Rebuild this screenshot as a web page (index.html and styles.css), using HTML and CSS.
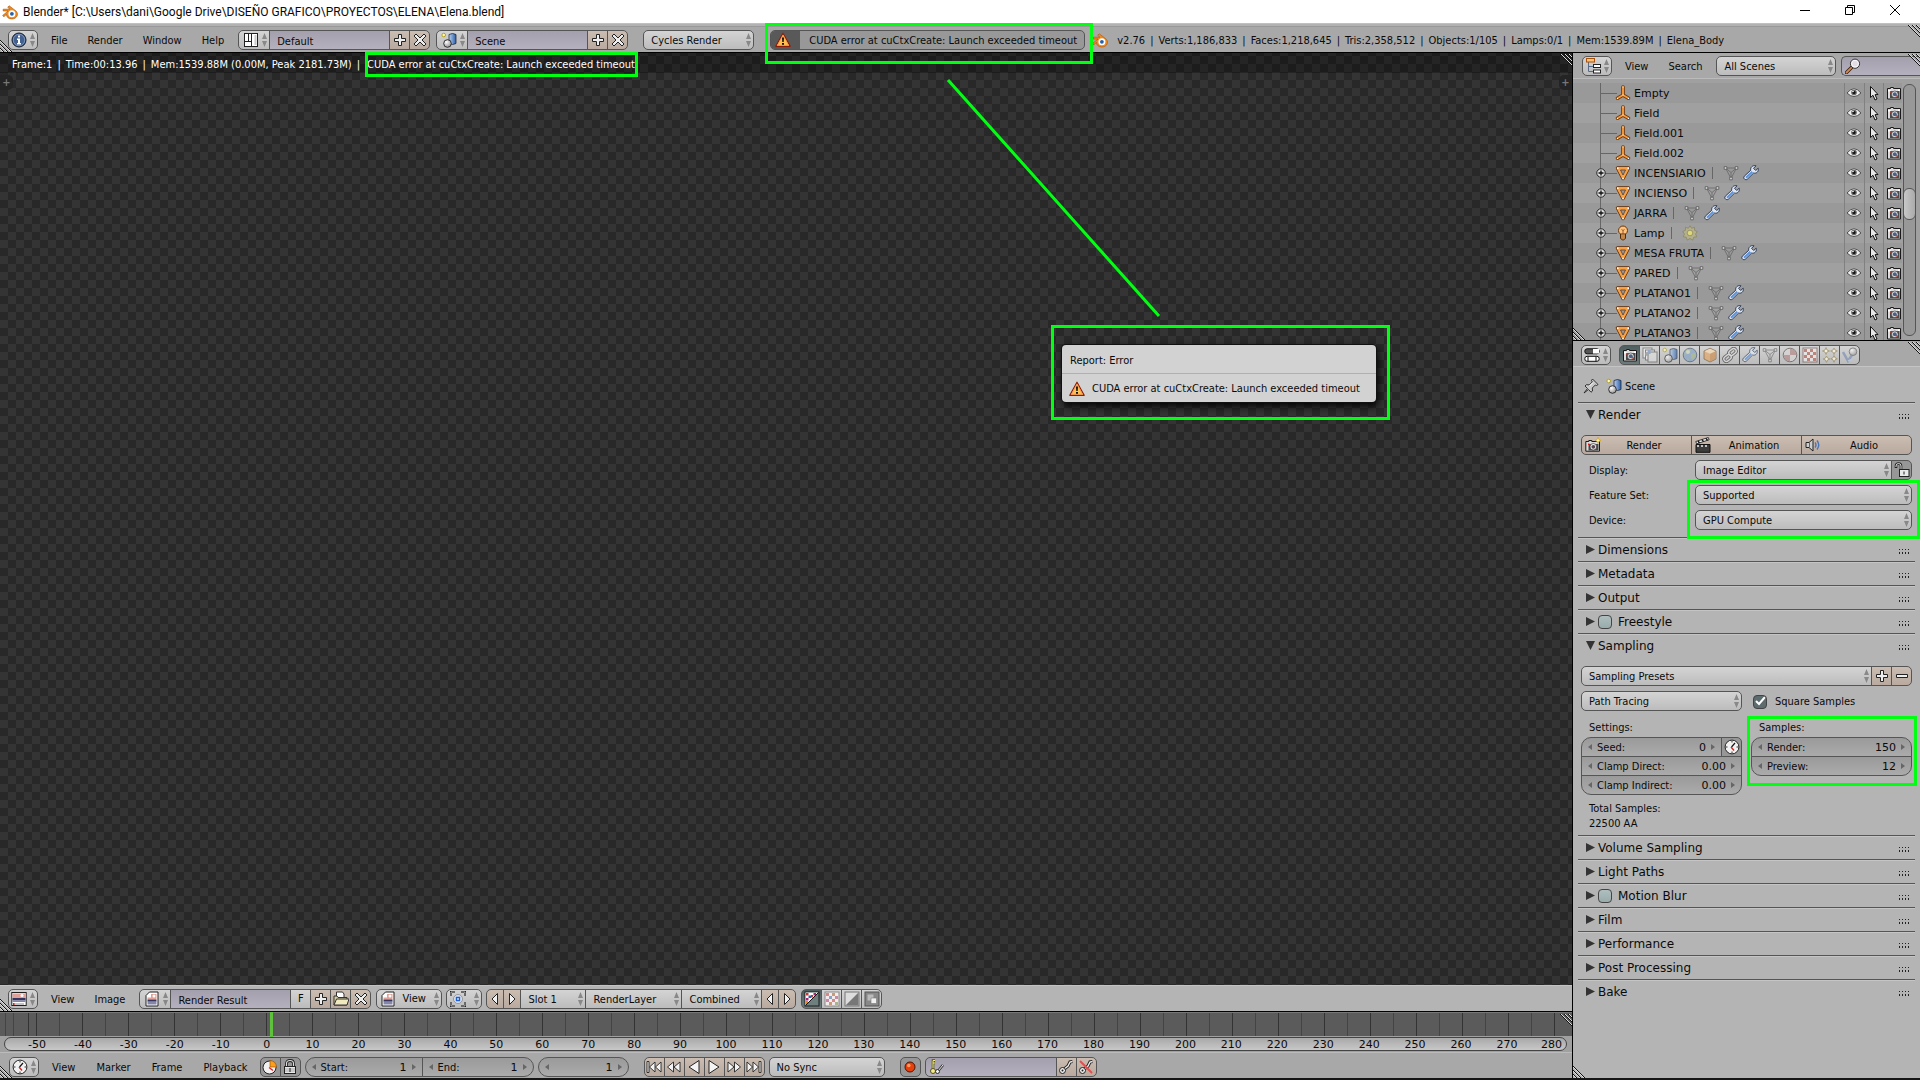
FILE: index.html
```html
<!DOCTYPE html>
<html lang="en">
<head>
    <meta charset="UTF-8">
    <meta name="viewport" content="width=device-width, initial-scale=1.0">
    <title>Blender* [C:\Users\dani\Google Drive\DISEÑO GRAFICO\PROYECTOS\ELENA\Elena.blend]</title>
    <link rel="stylesheet" href="styles.css">
</head>
<body>
    <!-- Icon set -->
    <svg class="sprite" aria-hidden="true">
        <linearGradient id="g-blue" x1="0" y1="0" x2="1" y2="0"><stop offset="0" stop-color="#b8d0f0"/><stop offset="1" stop-color="#2c5fa8"/></linearGradient>
        <radialGradient id="g-ball" cx=".35" cy=".3" r=".8"><stop offset="0" stop-color="#fff"/><stop offset="1" stop-color="#8a8a8a"/></radialGradient>
        <symbol id="blender" viewBox="0 0 16 16"><path d="M.6 11.500 6 7H1.200V5.200h6.600L5.700 3.300 7.200 1.800l6.700 5.100c3.300 2.900 1.200 8.100-4.100 8.100-3.300 0-5.400-2-5.400-4.600l-2.400 2.400z" fill="#f08a1c" stroke="#a8520c" stroke-width=".6"/><circle cx="9.900" cy="9.800" r="3.500" fill="#fff"/><circle cx="9.900" cy="9.800" r="1.900" fill="#2763ab"/></symbol>
        <symbol id="info" viewBox="0 0 16 16"><circle cx="8" cy="8" r="7" fill="#42618f" stroke="#151d2c"/><circle cx="8" cy="8" r="5.700" fill="none" stroke="#9fb4d6" stroke-width=".6"/><path d="M7 3.500h2v2H7zM6 6.500h3v4.500h1v1.500H6V11h1V8H6z" fill="#fff"/></symbol>
        <symbol id="layout" viewBox="0 0 16 16"><rect x="1.500" y="1.500" width="13" height="13" fill="#fff" stroke="#222"/><path d="M8.500 1v14M2 9.500h6M5.500 2v7" stroke="#222"/><path d="M12.500 3v10" stroke="#ccc" stroke-width="2"/></symbol>
        <symbol id="scene" viewBox="0 0 16 16"><path d="M8 2.500q3.500-2 7 0v9q-3.500 2-7 0z" fill="url(#g-blue)" stroke="#222a3a" stroke-width=".8"/><circle cx="6.500" cy="11.500" r="3.800" fill="url(#g-ball)" stroke="#222" stroke-width=".9"/><circle cx="2.700" cy="3" r="1.800" fill="#fffbc0" stroke="#b4a020"/></symbol>
        <symbol id="plus" viewBox="0 0 16 16"><path d="M6.500 2.500h3v4h4v3h-4v4h-3v-4h-4v-3h4z" fill="#eee" stroke="#222"/></symbol>
        <symbol id="minus" viewBox="0 0 16 16"><path d="M2.500 6.500h11v3h-11z" fill="#eee" stroke="#222"/></symbol>
        <symbol id="cross" viewBox="0 0 16 16"><path d="m4 2 4 4 4-4 2 2-4 4 4 4-2 2-4-4-4 4-2-2 4-4-4-4z" fill="#eee" stroke="#222"/></symbol>
        <symbol id="warn" viewBox="0 0 16 16"><path d="M8 1.200 15.200 14.300H.8z" fill="#ffc34d" stroke="#8c1c08" stroke-width="1.200" stroke-linejoin="round"/><path d="M8 3 13.500 13.300h-11z" fill="none" stroke="#f9905a" stroke-width=".8"/><path d="M7 5.500h2L8.700 10H7.300zM7 11h2v1.700H7z" fill="#111"/></symbol>
        <symbol id="tree" viewBox="0 0 16 16"><path d="M3.500 4v9.500H8M3.500 8.500H8" fill="none" stroke="#5a6b85"/><rect x="1.500" y=".5" width="8" height="3.500" fill="#ffc274" stroke="#a8500c"/><rect x="8.500" y="6.500" width="7" height="3" fill="#fff" stroke="#222"/><rect x="8.500" y="12" width="7" height="3" fill="#fff" stroke="#222"/></symbol>
        <symbol id="lens" viewBox="0 0 16 16"><path d="m6.500 9.500-5 5" stroke="#3a2314" stroke-width="3.500" stroke-linecap="round"/><path d="m6.200 9.800-4.700 4.700" stroke="#d08a56" stroke-width="1.800" stroke-linecap="round"/><circle cx="10" cy="5.700" r="4.600" fill="#e4dde6" stroke="#333"/><circle cx="10" cy="5.700" r="3.400" fill="none" stroke="#fff" stroke-width=".8"/></symbol>
        <symbol id="empty" viewBox="0 0 16 16"><path d="M8 2v8L2.500 13.200M8 10l5.500 3.200" fill="none" stroke="#6e3406" stroke-width="3.600" stroke-linecap="round"/><path d="M8 2v8L2.500 13.200M8 10l5.500 3.200" fill="none" stroke="#f79a3c" stroke-width="1.900" stroke-linecap="round"/><path d="M7.500 1.500h1v1h-1zM2 13h1v1H2zM13 13h1v1h-1zM7.500 9.500h1v1h-1z" fill="#fff"/></symbol>
        <symbol id="mesh" viewBox="0 0 16 16"><path d="M2.500 3h11L8 13.500z" fill="#e7a257" stroke="#5e2a02" stroke-width="3.400" stroke-linejoin="round"/><path d="M2.500 3h11L8 13.500z" fill="#b2b0ae" stroke="#fb9f3f" stroke-width="1.900" stroke-linejoin="round"/><path d="M5.500 5h5L8 10z" fill="#999" stroke="#5e2a02" stroke-width=".7"/><path d="M2 2.500h1.500v1.500H2zM12.500 2.500H14v1.500h-1.500zM7.300 12.700h1.500v1.500H7.300z" fill="#fff"/></symbol>
        <symbol id="lamp" viewBox="0 0 16 16"><circle cx="8" cy="5.500" r="4.500" fill="#ffc27c" stroke="#6e3406"/><path d="M5.500 9h5v4.500L8 15.200l-2.500-1.700z" fill="#f6b26b" stroke="#4e2a0a"/><path d="M6 11h4M6 13h4M8 9V5.500L6.500 4.500M8 5.500l1.500-1" fill="none" stroke="#7b4410" stroke-width=".8"/></symbol>
        <symbol id="meshdata" viewBox="0 0 16 16"><path d="M2.500 3h11L8 13.500zM2.500 3 8 7.500 13.500 3M8 7.500v6" fill="none" stroke="#6c6c6c" stroke-width=".9"/><g fill="#ddd" stroke="#555" stroke-width=".8"><path d="M1.200 1.700h2.600v2.600H1.200zM12.200 1.700h2.600v2.600h-2.600zM6.700 12.200h2.600v2.600H6.700z"/></g></symbol>
        <symbol id="sun" viewBox="0 0 16 16"><path d="m8 .8 1.600 2.500 2.900-1 .1 3 2.700 1.300L13.500 9l1.300 2.700-3 .5-1 2.900L8 13.500l-2.800 1.600-1-2.900-3-.5L2.500 9 .7 6.600l2.700-1.300.1-3 2.900 1z" fill="#b3b08e" stroke="#85815c" stroke-width=".7"/><circle cx="8" cy="8" r="2.800" fill="#e0d67c" stroke="#85815c" stroke-width=".7"/></symbol>
        <symbol id="wrench" viewBox="0 0 16 16"><path d="M13 .8 10.500 3.300l2.200 2.200 2.500-2.300c.8 3.500-2 5.600-4.600 4.800L4.500 14c-1.800 2-5-.8-3.200-2.800L7.800 5.200C7 2.500 9.800-.2 13 .8z" fill="#dfe7f3" stroke="#1d2b48" stroke-width=".9"/><path d="M9.300 6.800 3 12.800" stroke="#5b93dd" stroke-width="2"/></symbol>
        <symbol id="eye" viewBox="0 0 16 16"><path d="M1 8q7-8.500 14 0-7 7-14 0z" fill="#eee" stroke="#444" stroke-width=".9"/><circle cx="8" cy="7.500" r="2.800" fill="#666"/><circle cx="8" cy="7.500" r="1.500" fill="#111"/><circle cx="7" cy="6.500" r=".8" fill="#fff"/></symbol>
        <symbol id="cursor" viewBox="0 0 16 16"><path d="M4.500 1.500v11l2.500-2.200 2 4.700 2-1-2-4.300 3-.2z" fill="#e8e8e8" stroke="#111"/></symbol>
        <symbol id="camera" viewBox="0 0 16 16"><path d="M1.500 3.500h3v-1h3v1h7v10.500h-13z" fill="#dcdcdc" stroke="#1a1a1a"/><path d="M4 6h9.500v7H4z" fill="#4a4a4a"/><path d="M2 5h2.500v1.500H2zM12 4.500h2v1.500h-2z" fill="#fff"/><circle cx="8.800" cy="9.300" r="3.300" fill="#e8e8e8" stroke="#333" stroke-width=".6"/><circle cx="8.800" cy="9.300" r="2" fill="#4d5f80"/><path d="M9.500 10H11v1.500H9.500zM4 6h1.500v1.500H4z" fill="#d8402e"/></symbol>
        <symbol id="expand" viewBox="0 0 16 16"><circle cx="8" cy="8" r="4.200" fill="#ddd" stroke="#222"/><path d="M8 5.500v5M5.500 8h5" stroke="#111" stroke-width="1.300"/></symbol>
        <symbol id="props" viewBox="0 0 16 16"><rect x=".8" y="1.800" width="14.400" height="5" rx="2.300" fill="#555" stroke="#111"/><path d="M9 2h6v4.500H9z" fill="#fff"/><rect x=".8" y="9.300" width="14.400" height="5" rx="2.300" fill="#fff" stroke="#111"/><path d="M4 9.500v5M12 9.500v5" stroke="#111"/></symbol>
        <symbol id="layers" viewBox="0 0 16 16"><rect x="1" y="1" width="9" height="10" fill="#f2f2f2" stroke="#666"/><rect x="3.500" y="3" width="9" height="10" fill="#f2f2f2" stroke="#666"/><rect x="6" y="5" width="9" height="10" fill="#ddd" stroke="#666"/><circle cx="5" cy="7" r="2" fill="#999"/><path d="M6 3h2.500v4H6z" fill="#7d9ac6"/></symbol>
        <symbol id="world" viewBox="0 0 16 16"><circle cx="8" cy="8" r="6.800" fill="#86a4c4" stroke="#4b5c6e"/><path d="M4 3q3-2 5 0L7 6 4 7 2 9zM9 7l4-1 1 3-3 4-2-2zM5 11l2 1-1 2z" fill="#9fb48c"/><circle cx="6" cy="5" r="2" fill="#fff" opacity=".5"/></symbol>
        <symbol id="cube" viewBox="0 0 16 16"><path d="m8 1.200 6 2.800v8l-6 3-6-3V4z" fill="#e2a868" stroke="#6c4c2c" stroke-width=".8"/><path d="m2.500 4.300 5.500 2.500 5.500-2.500L8 1.800z" fill="#f7dcb8"/><path d="M8 7v7.500l5.500-2.800V4.500z" fill="#cd8f51"/></symbol>
        <symbol id="chain" viewBox="0 0 16 16"><g fill="none" stroke="#444" stroke-width="3.200"><rect x="6.500" y="2.500" width="8" height="5" rx="2.500" transform="rotate(-40 10.500 5)"/><rect x="1.500" y="8.500" width="8" height="5" rx="2.500" transform="rotate(-40 5.500 11)"/></g><g fill="none" stroke="#ddd" stroke-width="1.400"><rect x="6.500" y="2.500" width="8" height="5" rx="2.500" transform="rotate(-40 10.500 5)"/><rect x="1.500" y="8.500" width="8" height="5" rx="2.500" transform="rotate(-40 5.500 11)"/></g></symbol>
        <symbol id="material" viewBox="0 0 16 16"><circle cx="8" cy="8" r="6.800" fill="#d9d5d5" stroke="#555"/><path d="M8 8V1.500A6.500 6.500 0 0 1 14.500 8zM8 8v6.500A6.500 6.500 0 0 1 1.500 8z" fill="#b38a88"/></symbol>
        <symbol id="texture" viewBox="0 0 16 16"><rect x="1" y="1" width="14" height="14" fill="#eee" stroke="#7a5e5a"/><path d="M2 2h3v3H2zM8 2h3v3H8zM5 5h3v3H5zM11 5h3v3h-3zM2 8h3v3H2zM8 8h3v3H8zM5 11h3v3H5zM11 11h3v3h-3z" fill="#b8685c"/></symbol>
        <symbol id="particles" viewBox="0 0 16 16"><g fill="#fffbe0" stroke="#8a7a48" stroke-width=".8"><path d="m4 .5 1 2.500 2.500 1L5 5 4 7.500 3 5 .5 4 3 3zM12 1l1 2 2.300 1L13 5l-1 2.500L11 5 8.700 4 11 3zM4.500 9l1 2 2.300 1-2.300 1-1 2.300-1-2.300-2.300-1 2.300-1zM12 8.500l1 2.300 2.300 1-2.300 1-1 2.500-1-2.500-2.300-1 2.300-1z"/></g></symbol>
        <symbol id="physics" viewBox="0 0 16 16"><path d="m1 5 5 9 4-6" fill="none" stroke="#7d92b4" stroke-width="2.500"/><path d="m6 14 5-2" stroke="#b9c8dd" stroke-width="1.500"/><circle cx="11" cy="4.700" r="3.800" fill="url(#g-ball)" stroke="#666"/></symbol>
        <symbol id="pin" viewBox="0 0 16 16"><path d="m9.500 1 5.500 5.500-1.500 1-1.200-.5-3 3 .2 3L8 14.200 5.500 11.500 1 15l3.500-4.500L2 8l1.300-1.300 3 .2 3-3L8.500 2.500z" fill="#c8c8c8" stroke="#222" stroke-width=".9"/><path d="m6.500 8 3.500-3.500" stroke="#fff"/></symbol>
        <symbol id="render" viewBox="0 0 16 16"><path d="M.8 4.500h3v-1h3v1h7.700v9.700H.8z" fill="#dcdcdc" stroke="#1a1a1a"/><path d="M3.500 7h10v6.500h-10z" fill="#4a4a4a"/><circle cx="8.300" cy="9.800" r="3.300" fill="#eee" stroke="#222" stroke-width=".6"/><circle cx="8.300" cy="9.800" r="1.900" fill="#5a4450"/><path d="M3 6.500h1.500V8H3z" fill="#e02020"/><path d="m13 .3.900 2.300 2.100.9-2.100.9-.9 2.100-.9-2.100L10 3.500l2.100-.9z" fill="#fff3a0" stroke="#c79a10" stroke-width=".6"/></symbol>
        <symbol id="clap" viewBox="0 0 16 16"><path d="M1 7.500h14v7.800H1z" fill="#3c3c3c" stroke="#111"/><path d="m.8 4.500 12.500-4 .8 2.300-12.500 4z" fill="#f4f4f4" stroke="#111" stroke-width=".8"/><path d="m3 4 1.500 2M7 2.700l1.500 2M11 1.300l1.500 2" stroke="#111" stroke-width="1.400"/><path d="M2 9h12" stroke="#eee" stroke-width="1.600" stroke-dasharray="2 2"/></symbol>
        <symbol id="speaker" viewBox="0 0 16 16"><path d="M1 5.500h3l4-3.500v12l-4-3.500H1z" fill="#ccc" stroke="#222"/><path d="M4.500 5v6" stroke="#666"/><path d="M10 5.500q2 2.500 0 5M12 3.500q3.500 4.500 0 9" fill="none" stroke="#4a74b4" stroke-width="1.400"/></symbol>
        <symbol id="unlock" viewBox="0 0 16 16"><path d="M2 6V4Q2 1.500 4.500 1.500T7 4v3.500" fill="none" stroke="#222" stroke-width="2.600"/><path d="M2 5V4Q2 1.500 4.500 1.500T7 4v3.500" fill="none" stroke="#ddd" stroke-width="1"/><rect x="5.500" y="7.500" width="9.500" height="7" fill="#e8e8e8" stroke="#222"/><path d="M10 9.500v3" stroke="#222"/></symbol>
        <symbol id="lock" viewBox="0 0 16 16"><path d="M4.500 8V4.500Q4.500 1.500 8 1.500t3.500 3V8" fill="none" stroke="#222" stroke-width="2.800"/><path d="M4.500 8V4.500Q4.500 1.500 8 1.500t3.500 3V8" fill="none" stroke="#ddd" stroke-width="1.100"/><rect x="2.500" y="7.500" width="11" height="7" fill="#e8e8e8" stroke="#222"/><path d="M3 10h10M3 12h10" stroke="#aaa"/><path d="M8 9v4" stroke="#222"/></symbol>
        <symbol id="clock" viewBox="0 0 16 16"><circle cx="8" cy="8" r="6.900" fill="#f2f2f2" stroke="#222"/><path d="M8 2v1.500M8 12.500V14M2 8h1.500M12.500 8H14" stroke="#333"/><path d="m11 4-3.500 4" stroke="#111" stroke-width="1.200"/><path d="m7 8 3 3.500" stroke="#d22" stroke-width="1.400"/></symbol>
        <symbol id="autokey" viewBox="0 0 16 16"><circle cx="7.500" cy="8.500" r="6.500" fill="#f2f2f2" stroke="#222"/><path d="M8 8V1.500q6 .5 6.500 6.500z" fill="#ff9d1c" stroke="#8c4a00" stroke-width=".6"/><path d="m7 8.500 4 3" stroke="#d22" stroke-width="1.300"/></symbol>
        <symbol id="imged" viewBox="0 0 16 16"><rect x=".8" y="1.500" width="14.400" height="13" fill="#fff" stroke="#222"/><path d="M1.500 2.500h13V7h-13z" fill="#e0a197"/><circle cx="11" cy="4.500" r="1.500" fill="#fff"/><path d="M1.500 7h13v2.500h-13z" fill="#35355f"/><path d="M1.500 9.500h13V11h-13z" fill="#8587a8"/><path d="M3 13h10" stroke="#888"/><path d="M2 12h1.500v2H2z" fill="#e02020"/></symbol>
        <symbol id="imgdoc" viewBox="0 0 16 16"><path d="M5.500 1H14v14H2V4.500z" fill="#fff" stroke="#222"/><path d="M7 3h5.500v5.500h-9V6.500H7z" fill="#e0a197"/><circle cx="10" cy="5" r="1.500" fill="#fff"/><path d="M3.500 8.500h9v2.200h-9z" fill="#35355f"/><path d="M3.500 10.700h9v2.800h-9z" fill="#8587a8"/></symbol>
        <symbol id="folder" viewBox="0 0 16 16"><path d="M3.500 1h6l1.500 2v7h-7.500z" fill="#fff" stroke="#333"/><path d="M1 14V5h3l1 1.500h9V14z" fill="#d8cf9a" stroke="#333"/><path d="m1 14 2.500-6H16l-2 6z" fill="#f1eabf" stroke="#333"/></symbol>
        <symbol id="pivot" viewBox="0 0 16 16"><path d="M1 5V1h4M11 1h4v4M15 11v4h-4M5 15H1v-4" fill="none" stroke="#222" stroke-width="2"/><path d="M1 5V1h4M11 1h4v4M15 11v4h-4M5 15H1v-4" fill="none" stroke="#eee" stroke-width=".7"/><circle cx="8" cy="8" r="4.500" fill="#d8e2f0" stroke="#888" stroke-width=".8"/><path d="M6.500 6.500h3v3h-3z" fill="#fff" stroke="#1f5fd0" stroke-width="1.400"/></symbol>
        <symbol id="left" viewBox="0 0 16 16"><path d="M10.500 2.500v11L5 8z" fill="#f2f2f2" stroke="#222"/></symbol>
        <symbol id="right" viewBox="0 0 16 16"><path d="M5.500 2.500v11L11 8z" fill="#f2f2f2" stroke="#222"/></symbol>
        <symbol id="rgba" viewBox="0 0 16 16"><rect x="1" y="1" width="14" height="14" fill="#6f7f7d" stroke="#1a1a1a"/><path d="M1.500 1.500h13l-13 13z" fill="#fff"/><path d="M2 2h2.500v2.500H2zM7 4h2v2.500H7z" fill="#c33"/><path d="M4.500 4.500H7V7H4.500z" fill="#26a"/><path d="M9.500 2H12v2.500H9.500zM2 7h2.500v2.500H2z" fill="#a27"/><path d="M2 10h2v3H2z" fill="#e80"/><path d="m1.500 14.500 13-13" stroke="#111"/></symbol>
        <symbol id="rgb" viewBox="0 0 16 16"><rect x="1" y="1" width="14" height="14" fill="#f2ecec" stroke="#888"/><path d="M2 2h3v3H2zM8 8h3v3H8z" fill="#d48a8a"/><path d="M8 2h3v3H8zM5 11h3v3H5z" fill="#c79a78"/><path d="M5 5h3v3H5z" fill="#8aa4c4"/><path d="M11 5h3v3h-3zM2 8h3v3H2z" fill="#c88aa4"/><path d="M11 11h3v3h-3z" fill="#a8b48a"/></symbol>
        <symbol id="alpha" viewBox="0 0 16 16"><rect x="1" y="1" width="14" height="14" fill="#ddd" stroke="#777"/><path d="M14.500 1.500v13h-13z" fill="#777"/></symbol>
        <symbol id="zbuf" viewBox="0 0 16 16"><rect x="1" y="1" width="14" height="14" fill="#888" stroke="#555"/><path d="M3.500 3.500h6v6h-6z" fill="#bbb"/><path d="M7 7h5.500v5.500H7z" fill="#f0f0f0" stroke="#777" stroke-width=".6"/></symbol>
        <symbol id="first" viewBox="0 0 16 16"><path d="M1 2.500h2v11H1zM9 3v10L3.500 8zM15 3v10L9.500 8z" fill="#f4f4f4" stroke="#222" stroke-width=".9"/></symbol>
        <symbol id="prev" viewBox="0 0 16 16"><path d="M7.500 3v10L1.500 8zM14 3v10L8 8z" fill="#f4f4f4" stroke="#222" stroke-width=".9"/></symbol>
        <symbol id="back" viewBox="0 0 16 16"><path d="M13 1.500v13L3 8z" fill="#f4f4f4" stroke="#222"/></symbol>
        <symbol id="play" viewBox="0 0 16 16"><path d="M3 1.500v13L13 8z" fill="#f4f4f4" stroke="#222"/></symbol>
        <symbol id="next" viewBox="0 0 16 16"><path d="M2 3v10l6-5zM8.500 3v10l6-5z" fill="#f4f4f4" stroke="#222" stroke-width=".9"/></symbol>
        <symbol id="last" viewBox="0 0 16 16"><path d="M15 2.500h-2v11h2zM7 3v10l5.500-5zM1 3v10l5.500-5z" fill="#f4f4f4" stroke="#222" stroke-width=".9"/></symbol>
        <symbol id="record" viewBox="0 0 16 16"><circle cx="8" cy="8" r="5" fill="#e8400c" stroke="#4a1404"/><circle cx="6.800" cy="6.500" r="1.800" fill="#ff9a60"/></symbol>
        <symbol id="keyset" viewBox="0 0 16 16"><path d="M4 10V1.500h2M4 4h2" fill="none" stroke="#55501a" stroke-width="2.600"/><path d="M4 10V1.500h2M4 4h2" fill="none" stroke="#f3eb8c"/><circle cx="4" cy="12" r="2.500" fill="#f3eb8c" stroke="#55501a"/><path d="m9 12 5-6" stroke="#333" stroke-width="2.600"/><path d="m9 12 5-6" stroke="#eee"/><circle cx="8.500" cy="12.500" r="2" fill="#eee" stroke="#333"/></symbol>
        <symbol id="key" viewBox="0 0 16 16"><path d="m5 11 5-4 2-4 2.500-.5" fill="none" stroke="#222" stroke-width="3.200"/><path d="m5 11 5-4 2-4 2.500-.5" fill="none" stroke="#eee" stroke-width="1.400"/><circle cx="4.500" cy="11.500" r="3" fill="#eee" stroke="#222"/><circle cx="4.500" cy="11.500" r="1" fill="#222"/></symbol>
        <symbol id="grip-tr" viewBox="0 0 12 12"><path d="M1 0l11 11M5 0l7 7M9 0l3 3" stroke="#ddd"/><path d="M0 0l12 12M4 0l8 8M8 0l4 4" stroke="#111"/></symbol>
        <symbol id="grip-bl" viewBox="0 0 12 12"><path d="M0 1l11 11M0 5l7 7M0 9l3 3" stroke="#ddd"/><path d="M0 0l12 12M0 4l8 8M0 8l4 4" stroke="#111"/></symbol>
    </svg>

    <header class="titlebar">
        <svg class="icon"><use href="#blender"/></svg>
        <span class="title">Blender* [C:\Users\dani\Google Drive\DISEÑO GRAFICO\PROYECTOS\ELENA\Elena.blend]</span>
        <button class="win" aria-label="Minimize"><svg viewBox="0 0 12 12"><path d="M1 6.500h10"/></svg></button>
        <button class="win" aria-label="Restore"><svg viewBox="0 0 12 12"><path d="M1.500 3.500h7v7h-7zM3.500 3.500v-2h7v7h-2"/></svg></button>
        <button class="win" aria-label="Close"><svg viewBox="0 0 12 12"><path d="m1 1 10 10M11 1 1 11"/></svg></button>
    </header>

    <nav class="bar bar-info">
        <button class="pick" aria-label="Editor type"><svg class="icon"><use href="#info"/></svg></button>
        <div class="menus">
            <button>File</button><button>Render</button><button>Window</button><button>Help</button>
        </div>
        <div class="group">
            <button class="pick" aria-label="Browse screens"><svg class="icon"><use href="#layout"/></svg></button>
            <input class="text w-name" aria-label="Screen" value="Default">
            <button class="tool" aria-label="Add screen"><svg class="icon"><use href="#plus"/></svg></button>
            <button class="tool" aria-label="Delete screen"><svg class="icon"><use href="#cross"/></svg></button>
        </div>
        <div class="group">
            <button class="pick" aria-label="Browse scenes"><svg class="icon"><use href="#scene"/></svg></button>
            <input class="text w-name" aria-label="Scene" value="Scene">
            <button class="tool" aria-label="Add scene"><svg class="icon"><use href="#plus"/></svg></button>
            <button class="tool" aria-label="Delete scene"><svg class="icon"><use href="#cross"/></svg></button>
        </div>
        <select class="select w-engine" aria-label="Render engine"><option>Cycles Render</option></select>
        <div class="report marked">
            <span class="report-icon"><svg class="icon"><use href="#warn"/></svg></span>
            <span class="report-text">CUDA error at cuCtxCreate: Launch exceeded timeout</span>
        </div>
        <svg class="icon logo"><use href="#blender"/></svg>
        <div class="stats">
            <span>v2.76</span>|<span>Verts:1,186,833</span>|<span>Faces:1,218,645</span>|<span>Tris:2,358,512</span>|<span>Objects:1/105</span>|<span>Lamps:0/1</span>|<span>Mem:1539.89M</span>|<span>Elena_Body</span>
        </div>
        <svg class="grip tr"><use href="#grip-tr"/></svg>
        <svg class="grip bl"><use href="#grip-bl"/></svg>
    </nav>

    <div class="workspace">
        <main class="left">
            <section class="viewport">
                <div class="render-info">
                    <span>Frame:1</span>|<span>Time:00:13.96</span>|<span>Mem:1539.88M (0.00M, Peak 2181.73M)</span>|<span class="marked">CUDA error at cuCtxCreate: Launch exceeded timeout</span>
                </div>
                <button class="tab tab-left" aria-label="Show tool shelf">+</button>
                <button class="tab tab-right" aria-label="Show properties">+</button>
                <svg class="pointer" viewBox="0 0 216 240"><path d="M2 2l211 236"/></svg>
                <div class="popup marked" role="alert">
                    <p>Report: Error</p>
                    <p><svg class="icon"><use href="#warn"/></svg>CUDA error at cuCtxCreate: Launch exceeded timeout</p>
                </div>
                <svg class="grip tr"><use href="#grip-tr"/></svg>
            </section>

            <nav class="bar bar-image">
                <button class="pick" aria-label="Editor type"><svg class="icon"><use href="#imged"/></svg></button>
                <div class="menus"><button>View</button><button>Image</button></div>
                <div class="group">
                    <button class="pick" aria-label="Browse images"><svg class="icon"><use href="#imgdoc"/></svg></button>
                    <input class="text w-name" aria-label="Image name" value="Render Result">
                    <button class="flat" aria-label="Fake user">F</button>
                    <button class="tool" aria-label="New image"><svg class="icon"><use href="#plus"/></svg></button>
                    <button class="tool" aria-label="Open image"><svg class="icon"><use href="#folder"/></svg></button>
                    <button class="tool" aria-label="Unlink image"><svg class="icon"><use href="#cross"/></svg></button>
                </div>
                <button class="pick pick-view"><svg class="icon"><use href="#imgdoc"/></svg>View</button>
                <button class="pick pick-pivot" aria-label="Pivot"><svg class="icon"><use href="#pivot"/></svg></button>
                <div class="group">
                    <button class="tool narrow" aria-label="Previous slot"><svg class="icon"><use href="#left"/></svg></button>
                    <button class="tool narrow" aria-label="Next slot"><svg class="icon"><use href="#right"/></svg></button>
                    <select class="select w-slot" aria-label="Slot"><option>Slot 1</option></select>
                    <select class="select w-layer" aria-label="Layer"><option>RenderLayer</option></select>
                    <select class="select w-pass" aria-label="Pass"><option>Combined</option></select>
                    <button class="tool narrow" aria-label="Previous pass"><svg class="icon"><use href="#left"/></svg></button>
                    <button class="tool narrow" aria-label="Next pass"><svg class="icon"><use href="#right"/></svg></button>
                </div>
                <div class="group channels">
                    <button class="flat on" aria-label="Color and alpha"><svg class="icon"><use href="#rgba"/></svg></button>
                    <button class="flat" aria-label="Color"><svg class="icon"><use href="#rgb"/></svg></button>
                    <button class="flat" aria-label="Alpha"><svg class="icon"><use href="#alpha"/></svg></button>
                    <button class="flat" aria-label="Z buffer"><svg class="icon"><use href="#zbuf"/></svg></button>
                </div>
                <svg class="grip bl"><use href="#grip-bl"/></svg>
            </nav>

            <section class="timeline">
                <div class="frames">
                    <i class="playhead"></i>
                    <svg class="grip tr"><use href="#grip-tr"/></svg>
                </div>
                <div class="ruler">
                    <span>-50</span><span>-40</span><span>-30</span><span>-20</span><span>-10</span><span>0</span><span>10</span><span>20</span><span>30</span><span>40</span><span>50</span><span>60</span><span>70</span><span>80</span><span>90</span><span>100</span><span>110</span><span>120</span><span>130</span><span>140</span><span>150</span><span>160</span><span>170</span><span>180</span><span>190</span><span>200</span><span>210</span><span>220</span><span>230</span><span>240</span><span>250</span><span>260</span><span>270</span><span>280</span>
                </div>
            </section>

            <nav class="bar bar-time">
                <button class="pick" aria-label="Editor type"><svg class="icon"><use href="#clock"/></svg></button>
                <div class="menus"><button>View</button><button>Marker</button><button>Frame</button><button>Playback</button></div>
                <div class="group">
                    <button class="toggle" aria-label="Use preview range"><svg class="icon"><use href="#autokey"/></svg></button>
                    <button class="toggle" aria-label="Lock time"><svg class="icon"><use href="#lock"/></svg></button>
                </div>
                <div class="group round">
                    <label class="num w-start">Start:<input value="1"></label>
                    <label class="num w-end">End:<input value="1"></label>
                </div>
                <div class="group round">
                    <label class="num w-current"><input value="1" aria-label="Current frame"></label>
                </div>
                <div class="group playback">
                    <button class="tool" aria-label="First frame"><svg class="icon"><use href="#first"/></svg></button>
                    <button class="tool" aria-label="Previous keyframe"><svg class="icon"><use href="#prev"/></svg></button>
                    <button class="tool" aria-label="Play backwards"><svg class="icon"><use href="#back"/></svg></button>
                    <button class="tool" aria-label="Play"><svg class="icon"><use href="#play"/></svg></button>
                    <button class="tool" aria-label="Next keyframe"><svg class="icon"><use href="#next"/></svg></button>
                    <button class="tool" aria-label="Last frame"><svg class="icon"><use href="#last"/></svg></button>
                </div>
                <select class="select w-sync" aria-label="Sync mode"><option>No Sync</option></select>
                <div class="group record">
                    <button class="toggle" aria-label="Auto keyframe"><svg class="icon"><use href="#record"/></svg></button>
                </div>
                <div class="group keying">
                    <span class="text w-keying"><svg class="icon"><use href="#keyset"/></svg><input aria-label="Keying set"></span>
                    <button class="tool" aria-label="Insert keyframe"><svg class="icon"><use href="#key"/></svg></button>
                    <button class="tool" aria-label="Delete keyframe"><svg class="icon" viewBox="0 0 16 16"><use href="#key"/><path d="m2 2 12 12" stroke="#e05050" stroke-width="2"/></svg></button>
                </div>
                <svg class="grip bl"><use href="#grip-bl"/></svg>
            </nav>
        </main>

        <aside class="right">
            <section class="outliner">
                <nav class="bar bar-outliner">
                    <button class="pick" aria-label="Editor type"><svg class="icon"><use href="#tree"/></svg></button>
                    <div class="menus"><button>View</button><button>Search</button></div>
                    <select class="select w-scenes" aria-label="Display mode"><option>All Scenes</option></select>
                    <span class="text search"><svg class="icon"><use href="#lens"/></svg><input aria-label="Filter"></span>
                    <svg class="grip tr"><use href="#grip-tr"/></svg>
                </nav>
                <div class="tree-wrap">
                    <ul class="tree">
                        <li class="child"><svg class="icon ob"><use href="#empty"/></svg><span>Empty</span><svg class="icon eye"><use href="#eye"/></svg><svg class="icon"><use href="#cursor"/></svg><svg class="icon"><use href="#camera"/></svg></li>
                        <li class="child"><svg class="icon ob"><use href="#empty"/></svg><span>Field</span><svg class="icon eye"><use href="#eye"/></svg><svg class="icon"><use href="#cursor"/></svg><svg class="icon"><use href="#camera"/></svg></li>
                        <li class="child"><svg class="icon ob"><use href="#empty"/></svg><span>Field.001</span><svg class="icon eye"><use href="#eye"/></svg><svg class="icon"><use href="#cursor"/></svg><svg class="icon"><use href="#camera"/></svg></li>
                        <li class="child"><svg class="icon ob"><use href="#empty"/></svg><span>Field.002</span><svg class="icon eye"><use href="#eye"/></svg><svg class="icon"><use href="#cursor"/></svg><svg class="icon"><use href="#camera"/></svg></li>
                        <li><svg class="icon ex"><use href="#expand"/></svg><svg class="icon ob"><use href="#mesh"/></svg><span>INCENSIARIO</span><i></i><svg class="icon"><use href="#meshdata"/></svg><svg class="icon"><use href="#wrench"/></svg><svg class="icon eye"><use href="#eye"/></svg><svg class="icon"><use href="#cursor"/></svg><svg class="icon"><use href="#camera"/></svg></li>
                        <li><svg class="icon ex"><use href="#expand"/></svg><svg class="icon ob"><use href="#mesh"/></svg><span>INCIENSO</span><i></i><svg class="icon"><use href="#meshdata"/></svg><svg class="icon"><use href="#wrench"/></svg><svg class="icon eye"><use href="#eye"/></svg><svg class="icon"><use href="#cursor"/></svg><svg class="icon"><use href="#camera"/></svg></li>
                        <li><svg class="icon ex"><use href="#expand"/></svg><svg class="icon ob"><use href="#mesh"/></svg><span>JARRA</span><i></i><svg class="icon"><use href="#meshdata"/></svg><svg class="icon"><use href="#wrench"/></svg><svg class="icon eye"><use href="#eye"/></svg><svg class="icon"><use href="#cursor"/></svg><svg class="icon"><use href="#camera"/></svg></li>
                        <li><svg class="icon ex"><use href="#expand"/></svg><svg class="icon ob"><use href="#lamp"/></svg><span>Lamp</span><i></i><svg class="icon"><use href="#sun"/></svg><svg class="icon eye"><use href="#eye"/></svg><svg class="icon"><use href="#cursor"/></svg><svg class="icon"><use href="#camera"/></svg></li>
                        <li><svg class="icon ex"><use href="#expand"/></svg><svg class="icon ob"><use href="#mesh"/></svg><span>MESA FRUTA</span><i></i><svg class="icon"><use href="#meshdata"/></svg><svg class="icon"><use href="#wrench"/></svg><svg class="icon eye"><use href="#eye"/></svg><svg class="icon"><use href="#cursor"/></svg><svg class="icon"><use href="#camera"/></svg></li>
                        <li><svg class="icon ex"><use href="#expand"/></svg><svg class="icon ob"><use href="#mesh"/></svg><span>PARED</span><i></i><svg class="icon"><use href="#meshdata"/></svg><svg class="icon eye"><use href="#eye"/></svg><svg class="icon"><use href="#cursor"/></svg><svg class="icon"><use href="#camera"/></svg></li>
                        <li><svg class="icon ex"><use href="#expand"/></svg><svg class="icon ob"><use href="#mesh"/></svg><span>PLATANO1</span><i></i><svg class="icon"><use href="#meshdata"/></svg><svg class="icon"><use href="#wrench"/></svg><svg class="icon eye"><use href="#eye"/></svg><svg class="icon"><use href="#cursor"/></svg><svg class="icon"><use href="#camera"/></svg></li>
                        <li><svg class="icon ex"><use href="#expand"/></svg><svg class="icon ob"><use href="#mesh"/></svg><span>PLATANO2</span><i></i><svg class="icon"><use href="#meshdata"/></svg><svg class="icon"><use href="#wrench"/></svg><svg class="icon eye"><use href="#eye"/></svg><svg class="icon"><use href="#cursor"/></svg><svg class="icon"><use href="#camera"/></svg></li>
                        <li><svg class="icon ex"><use href="#expand"/></svg><svg class="icon ob"><use href="#mesh"/></svg><span>PLATANO3</span><i></i><svg class="icon"><use href="#meshdata"/></svg><svg class="icon"><use href="#wrench"/></svg><svg class="icon eye"><use href="#eye"/></svg><svg class="icon"><use href="#cursor"/></svg><svg class="icon"><use href="#camera"/></svg></li>
                    </ul>
                    <div class="scroll"><div class="thumb"></div></div>
                    <svg class="grip bl"><use href="#grip-bl"/></svg>
                </div>
            </section>

            <section class="properties">
                <nav class="bar bar-props">
                    <button class="pick" aria-label="Editor type"><svg class="icon"><use href="#props"/></svg></button>
                    <div class="group tabs">
                        <button class="flat on" aria-label="Render"><svg class="icon"><use href="#camera"/></svg></button>
                        <button class="flat" aria-label="Render layers"><svg class="icon"><use href="#layers"/></svg></button>
                        <button class="flat" aria-label="Scene"><svg class="icon"><use href="#scene"/></svg></button>
                        <button class="flat" aria-label="World"><svg class="icon"><use href="#world"/></svg></button>
                        <button class="flat" aria-label="Object"><svg class="icon"><use href="#cube"/></svg></button>
                        <button class="flat" aria-label="Constraints"><svg class="icon"><use href="#chain"/></svg></button>
                        <button class="flat" aria-label="Modifiers"><svg class="icon"><use href="#wrench"/></svg></button>
                        <button class="flat" aria-label="Data"><svg class="icon"><use href="#meshdata"/></svg></button>
                        <button class="flat" aria-label="Material"><svg class="icon"><use href="#material"/></svg></button>
                        <button class="flat" aria-label="Texture"><svg class="icon"><use href="#texture"/></svg></button>
                        <button class="flat" aria-label="Particles"><svg class="icon"><use href="#particles"/></svg></button>
                        <button class="flat" aria-label="Physics"><svg class="icon"><use href="#physics"/></svg></button>
                    </div>
                    <svg class="grip tr"><use href="#grip-tr"/></svg>
                </nav>
                <div class="context">
                    <svg class="icon"><use href="#pin"/></svg>
                    <svg class="icon"><use href="#scene"/></svg>
                    <span>Scene</span>
                </div>

                <details class="panel" open>
                    <summary>Render</summary>
                    <div class="body">
                        <div class="group thirds">
                            <button class="tool"><svg class="icon"><use href="#render"/></svg><span>Render</span></button>
                            <button class="tool"><svg class="icon"><use href="#clap"/></svg><span>Animation</span></button>
                            <button class="tool"><svg class="icon"><use href="#speaker"/></svg><span>Audio</span></button>
                        </div>
                        <div class="row">
                            <label for="display">Display:</label>
                            <div class="group">
                                <select class="select" id="display"><option>Image Editor</option></select>
                                <button class="toggle" aria-label="Lock interface"><svg class="icon"><use href="#unlock"/></svg></button>
                            </div>
                        </div>
                        <div class="marked device">
                            <div class="row">
                                <label for="feature">Feature Set:</label>
                                <select class="select" id="feature"><option>Supported</option></select>
                            </div>
                            <div class="row">
                                <label for="device">Device:</label>
                                <select class="select" id="device"><option>GPU Compute</option></select>
                            </div>
                        </div>
                    </div>
                </details>
                <details class="panel"><summary>Dimensions</summary></details>
                <details class="panel"><summary>Metadata</summary></details>
                <details class="panel"><summary>Output</summary></details>
                <details class="panel"><summary><label><input type="checkbox">Freestyle</label></summary></details>
                <details class="panel" open>
                    <summary>Sampling</summary>
                    <div class="body">
                        <div class="group">
                            <select class="select" aria-label="Sampling presets"><option>Sampling Presets</option></select>
                            <button class="tool" aria-label="Add preset"><svg class="icon"><use href="#plus"/></svg></button>
                            <button class="tool" aria-label="Remove preset"><svg class="icon"><use href="#minus"/></svg></button>
                        </div>
                        <div class="cols">
                            <select class="select" aria-label="Integrator"><option>Path Tracing</option></select>
                            <label class="check"><input type="checkbox" checked>Square Samples</label>
                        </div>
                        <div class="cols">
                            <div>
                                <p class="caption">Settings:</p>
                                <div class="stack">
                                    <div class="seed">
                                        <label class="num">Seed:<input value="0"></label>
                                        <button class="toggle" aria-label="Animate seed"><svg class="icon"><use href="#clock"/></svg></button>
                                    </div>
                                    <label class="num">Clamp Direct:<input value="0.00"></label>
                                    <label class="num">Clamp Indirect:<input value="0.00"></label>
                                </div>
                            </div>
                            <div class="marked samples">
                                <p class="caption">Samples:</p>
                                <div class="stack">
                                    <label class="num">Render:<input value="150"></label>
                                    <label class="num">Preview:<input value="12"></label>
                                </div>
                            </div>
                        </div>
                        <p class="total">Total Samples:<br>22500 AA</p>
                    </div>
                </details>
                <details class="panel"><summary>Volume Sampling</summary></details>
                <details class="panel"><summary>Light Paths</summary></details>
                <details class="panel"><summary><label><input type="checkbox">Motion Blur</label></summary></details>
                <details class="panel"><summary>Film</summary></details>
                <details class="panel"><summary>Performance</summary></details>
                <details class="panel"><summary>Post Processing</summary></details>
                <details class="panel"><summary>Bake</summary></details>
                <svg class="grip bl"><use href="#grip-bl"/></svg>
            </section>
        </aside>
    </div>
</body>
</html>
```
FILE: styles.css
```css
* {
    box-sizing: border-box;
}
body {
    margin: 0;
    height: 100vh;
    display: flex;
    flex-direction: column;
    overflow: hidden;
    background: #111;
    border-bottom: 2px solid #151515;
    font-family: "DejaVu Sans Condensed", "DejaVu Sans", sans-serif;
    font-size: 11px;
    line-height: 14px;
    color: #0a0a0a;
}
button, input, select {
    font: inherit;
    color: inherit;
    margin: 0;
    padding: 0;
    border: none;
    background: none;
    min-width: 0;
}
p, ul {
    margin: 0;
    padding: 0;
    list-style: none;
}
.sprite {
    position: absolute;
    width: 0;
    height: 0;
}
.icon {
    width: 16px;
    height: 16px;
    flex: none;
    display: block;
}
.grip {
    position: absolute;
    width: 12px;
    height: 12px;
}
.grip.tr {
    top: 1px;
    right: 0;
}
.grip.bl {
    bottom: 0;
    left: 0;
}

/* Title bar */
.titlebar {
    display: flex;
    align-items: center;
    height: 23px;
    flex: none;
    padding: 0 3px 0 2px;
    background: #fff;
}
.title {
    flex: 1;
    margin-left: 5px;
    font-family: Roboto, "Open Sans", sans-serif;
    font-size: 12px;
}
.win {
    width: 45px;
    height: 20px;
}
.win svg {
    width: 12px;
    height: 12px;
    fill: none;
    stroke: #000;
}

/* Header bars */
.bar {
    position: relative;
    display: flex;
    align-items: center;
    flex: none;
    height: 26px;
    padding-left: 8px;
    background: #a8a8a8;
}
.bar-info {
    height: 30px;
    padding-top: 6px;
    padding-bottom: 2px;
    border-top: 1px solid #c0c0c0;
    border-bottom: 1px solid #000;
    box-shadow: inset 0 2px #b2b2b2, inset 0 3px #999;
}
.bar-image {
    height: 27px;
    padding-top: 3px;
    padding-bottom: 2px;
    background: #b4b4b4;
    border-top: 1px solid #c4c4c4;
    border-bottom: 1px solid #000;
}
.bar-time {
    height: 26px;
    padding: 4px 0 1px 9px;
    border-top: 1px solid #bbb;
}
.bar-outliner {
    padding: 3px 0 2px 9px;
    border-bottom: 1px solid #bbb;
    overflow: hidden;
}
.bar-props {
    padding-top: 3px;
    border-bottom: 1px solid #c4c4c4;
}
.menus {
    display: flex;
    gap: 20px;
    padding: 2px 14px 0 13px;
}
.bar-time .menus {
    gap: 21px;
    padding-right: 12px;
}

/* Widgets */
.pick, .select, .flat {
    height: 20px;
    border: 1px solid #555;
    border-radius: 5px;
    background: linear-gradient(#d4d4d4, #bcbcbc);
}
.pick, .select {
    background: url("data:image/svg+xml,%3Csvg xmlns='http://www.w3.org/2000/svg' width='5' height='14'%3E%3Cpath d='M0 6 2.500 0 5 6zM0 8 2.500 14 5 8z' fill='%23888'/%3E%3C/svg%3E") no-repeat right 2px center, linear-gradient(#d4d4d4, #bcbcbc);
}
.pick {
    display: flex;
    align-items: center;
    flex: none;
    width: 30px;
    padding-left: 2px;
}
.pick-view {
    width: 66px;
    margin-left: 5px;
    gap: 6px;
    padding-left: 3px;
}
.pick-pivot {
    width: 36px;
    margin: 0 4px;
    padding-left: 3px;
}
.select {
    appearance: none;
    padding: 2px 12px 0 7px;
}
.group {
    display: flex;
}
.group > * {
    border-radius: 0;
}
.group > * + * {
    margin-left: -1px;
}
.group > :first-child {
    border-radius: 5px 0 0 5px;
}
.group > :last-child {
    border-radius: 0 5px 5px 0;
}
.group > :only-child {
    border-radius: 5px;
}
.group .pick {
    width: 32px;
    padding-left: 4px;
}
.group + .group {
    margin-left: 6px;
}
.text {
    height: 20px;
    padding: 2px 0 0 7px;
    border: 1px solid #555;
    background: linear-gradient(#a49fac, #b5b0bd);
}
.tool, .flat, .toggle {
    display: flex;
    align-items: center;
    justify-content: center;
    flex: none;
    width: 21px;
    height: 20px;
    border: 1px solid #555;
}
.tool {
    background: linear-gradient(#cbbdb2, #b9a99e);
}
.tool.narrow {
    width: 18px;
}
.toggle {
    background: #979797;
}
.flat.on {
    background: linear-gradient(#4f5e5e, #6c7c7c);
}
.w-name { width: 121px; }
.w-engine { width: 111px; margin-left: 15px; }
.w-slot { width: 66px; }
.w-layer { width: 97px; }
.w-pass { width: 81px; }
.w-start { width: 118px; }
.w-end { width: 112px; }
.w-current { width: 91px; }
.w-sync { width: 116px; margin-left: 4px; }
.w-scenes { width: 120px; }
.w-keying { width: 132px; }
.w-keying, .search {
    display: flex;
    align-items: center;
    padding: 0 0 0 3px;
}
.num {
    display: flex;
    align-items: center;
    height: 20px;
    padding: 1px 15px 0;
    border: 1px solid #555;
    background: linear-gradient(#9a9a9a, #ababab);
    position: relative;
}
.num input {
    flex: 1;
    width: 0;
    font-family: "DejaVu Sans", sans-serif;
    text-align: right;
}
.num::before, .num::after {
    content: "";
    position: absolute;
    top: 6px;
    border: 3px solid transparent;
}
.num::before {
    left: 3px;
    border-right: 4px solid #666;
}
.num::after {
    right: 3px;
    border-left: 4px solid #666;
}
.round > :first-child { border-radius: 10px 0 0 10px; }
.round > :last-child { border-radius: 0 10px 10px 0; }
.round > :only-child { border-radius: 10px; }
.group.round { margin-left: 4px; }
.group.playback { margin-left: 15px; }
.group.record { margin: 0 4px 0 15px; }
.group.channels { margin-left: 5px; }
.group.keying { margin-left: 0; }

/* Info bar report and stats */
.report {
    display: flex;
    width: 315px;
    height: 20px;
    margin-left: 16px;
    border: 1px solid #555;
    border-radius: 5px;
    background: #989898;
}
.report-icon {
    width: 29px;
    padding: 1px 0 0 4px;
    border-radius: 4px 0 0 4px;
    background: #595959;
}
.report-text {
    padding: 3px 0 0 9px;
    white-space: nowrap;
}
.logo {
    margin-left: 7px;
}
.stats {
    display: flex;
    gap: 5px;
    padding-top: 2px;
    margin-left: 9px;
    white-space: nowrap;
}

/* Green markers */
.marked {
    position: relative;
}
.marked::after {
    content: "";
    position: absolute;
    border: 3px solid #0f1;
    inset: -6px -3px -5px -2px;
    z-index: 2;
    pointer-events: none;
}
.report.marked::after {
    inset: -8px -9px -15px -6px;
}
.popup.marked::after {
    inset: -20px -14px -18px -11px;
}
.device.marked::after {
    inset: -5px -8px -9px 106px;
}
.samples.marked::after {
    inset: 0 -5px -10px -4px;
}
.pointer {
    position: absolute;
    top: 25px;
    left: 946px;
    width: 216px;
    height: 240px;
    fill: none;
    stroke: #0f1;
    stroke-width: 3px;
}

/* Main areas */
.workspace {
    flex: 1;
    display: flex;
    min-height: 0;
}
.left {
    flex: 1;
    min-width: 0;
    display: flex;
    flex-direction: column;
}
.right {
    width: 348px;
    display: flex;
    flex-direction: column;
    border-left: 1px solid #000;
}
.viewport {
    position: relative;
    flex: 1;
    background: repeating-conic-gradient(#343434 0 25%, #282828 0 50%) 0 3px / 16px 16px;
}
.render-info {
    display: flex;
    gap: 5px;
    height: 20px;
    padding: 5px 12px 0;
    background: rgba(0, 0, 0, .28);
    color: #fff;
    white-space: nowrap;
}
.render-info span {
    height: 14px;
}
.render-info .marked {
    margin-left: 2px;
}
.tab {
    position: absolute;
    top: 22px;
    width: 13px;
    height: 15px;
    background: #242424;
    color: #777;
    font-weight: bold;
    line-height: 13px;
}
.tab-left {
    left: 0;
    border-radius: 0 5px 5px 0;
}
.tab-right {
    right: 0;
    border-radius: 5px 0 0 5px;
}
.popup {
    position: absolute;
    top: 292px;
    left: 1062px;
    width: 314px;
    border-radius: 4px;
    background: #d2d2d2;
    box-shadow: 0 0 0 1px #111, 2px 4px 8px #000;
}
.popup p {
    display: flex;
    align-items: center;
    gap: 7px;
    height: 28px;
    padding-left: 8px;
    padding-top: 3px;
}
.popup p + p {
    height: 29px;
    padding: 2px 0 0 7px;
    border-top: 1px solid #b0b0b0;
}

/* Timeline */
.timeline {
    background: #a0a0a0;
    padding-bottom: 1px;
}
.frames {
    position: relative;
    height: 24px;
    border-top: 1px solid #777;
    background: repeating-linear-gradient(to right, #333 0 1px, transparent 1px 46px) 36px 0, repeating-linear-gradient(to right, #444 0 1px, transparent 1px 23px) 13px 0, #5b5b5b;
}
.playhead {
    position: absolute;
    left: 270px;
    top: -1px;
    width: 3px;
    height: 25px;
    background: #5fc23c;
}
.ruler {
    display: flex;
    height: 14px;
    margin: 1px 5px 0 4px;
    padding-left: 9px;
    border: 1px solid #444;
    border-radius: 7px;
    background: linear-gradient(#a8a8a8, #c8c8c8);
    font-family: "DejaVu Sans", sans-serif;
}
.ruler span {
    flex: 1;
    line-height: 13px;
    text-align: center;
}
.ruler span:last-child {
    flex: 0 0 36px;
    padding-right: 4px;
    text-align: right;
}

/* Outliner */
.outliner {
    flex: none;
    border-bottom: 1px solid #000;
}
.search {
    flex: 1;
    margin-left: 5px;
    border-radius: 5px 0 0 5px;
    border-right: none;
}
.search input, .w-keying input {
    flex: 1;
    width: 0;
}
.tree-wrap {
    position: relative;
    display: flex;
    height: 261px;
    overflow: hidden;
    padding-top: 4px;
    background: #a0a0a0;
}
.tree {
    flex: 1;
    margin-right: 1px;
    font-family: "DejaVu Sans", sans-serif;
    background:
        linear-gradient(#666, #666) 27px 0 / 1px 100% no-repeat,
        linear-gradient(#808080, #808080) right 57px top 0 / 1px 100% no-repeat,
        linear-gradient(#808080, #808080) right 37px top 0 / 1px 100% no-repeat,
        linear-gradient(#808080, #808080) right 18px top 0 / 1px 100% no-repeat,
        repeating-linear-gradient(#999 0 20px, #a0a0a0 20px 40px);
}
.tree li {
    display: flex;
    align-items: center;
    height: 20px;
    padding-left: 20px;
    background: linear-gradient(#666, #666) 28px 10px / 16px 1px no-repeat;
}
.tree .ex + .ob {
    margin-left: 6px;
}
.tree .child .ob {
    margin-left: 22px;
}
.tree span {
    margin-left: 3px;
    padding-top: 2px;
}
.tree i {
    width: 1px;
    height: 12px;
    margin: 0 10px 0 6px;
    background: #666;
}
.tree i + .icon + .icon:not(.eye) {
    margin-left: 4px;
}
.tree .eye {
    margin-left: auto;
}
.tree .eye ~ .icon {
    margin-left: 4px;
}
.scroll {
    width: 13px;
    margin: 1px 4px 4px 0;
    padding-top: 103px;
    border: 1px solid #555;
    border-radius: 6px;
    background: #989898;
}
.thumb {
    height: 32px;
    margin: 0 -1px;
    border: 1px solid #555;
    border-radius: 6px;
    background: linear-gradient(to right, #c8c8c8, #aaa);
}

/* Properties */
.properties {
    position: relative;
    flex: 1;
    background: #b4b4b4;
}
.tabs {
    margin-left: 8px;
}
.tabs .flat:not(.on) .icon {
    opacity: .7;
}
.context {
    display: flex;
    align-items: center;
    gap: 7px;
    height: 35px;
    padding: 2px 10px 0;
}
.context span {
    margin-left: -4px;
    padding-top: 2px;
}
.panel {
    margin: 0 5px;
    border-top: 1px solid #555;
    box-shadow: inset 0 1px #c4c4c4;
}
.panel summary {
    display: flex;
    align-items: center;
    height: 23px;
    padding: 0 5px 0 8px;
    font-family: "DejaVu Sans", sans-serif;
    font-size: 12px;
}
.panel summary::before {
    content: "";
    width: 9px;
    height: 9px;
    margin-right: 3px;
    background: #333;
    clip-path: polygon(0 0, 100% 50%, 0 100%);
}
.panel[open] summary::before {
    clip-path: polygon(0 0, 100% 0, 50% 100%);
}
.panel summary::after {
    content: "";
    width: 11px;
    height: 5px;
    margin: 4px 0 0 auto;
    background: linear-gradient(#b4b4b4, #b4b4b4) 0 1px / 100% 2px no-repeat, repeating-linear-gradient(to right, #222 0 1px, transparent 1px 3px);
}
.panel label {
    display: flex;
    align-items: center;
}
.body {
    display: flex;
    flex-direction: column;
    gap: 5px;
    padding: 9px 3px 7px;
}
.row {
    display: grid;
    grid-template-columns: 106px 1fr;
    padding-left: 8px;
}
.row label {
    padding-top: 2px;
}
.device {
    display: flex;
    flex-direction: column;
    gap: 5px;
}
.body .group .select {
    flex: 1;
}
.thirds .tool {
    flex: 1;
    justify-content: flex-start;
    padding-left: 3px;
}
.thirds .tool span {
    flex: 1;
    padding: 2px 4px 0 0;
}
.cols {
    display: grid;
    grid-template-columns: 1fr 1fr;
    align-items: start;
    gap: 9px;
}
input[type="checkbox"] {
    appearance: none;
    width: 14px;
    height: 14px;
    margin-right: 6px;
    border: 1px solid #444;
    border-radius: 4px;
    background: linear-gradient(#afbfbf, #9aabab);
}
input[type="checkbox"]:checked {
    background: url("data:image/svg+xml,%3Csvg xmlns='http://www.w3.org/2000/svg' width='12' height='12'%3E%3Cpath d='m2 5 3 3 6-7' fill='none' stroke='%23fff' stroke-width='2'/%3E%3C/svg%3E") no-repeat center, #5d6c6e;
}
.check {
    height: 20px;
    padding: 1px 0 0 2px;
}
.check input[type="checkbox"] {
    margin-right: 8px;
}
.caption {
    padding: 5px 8px 2px;
}
.stack .num, .seed {
    height: 20px;
}
.stack > * + * {
    margin-top: -1px;
}
.stack {
    display: flex;
    flex-direction: column;
}
.stack > :first-child, .seed .num {
    border-top-left-radius: 10px;
}
.stack > .num:first-child {
    border-top-right-radius: 10px;
}
.stack > :last-child {
    border-radius: 0 0 10px 10px;
}
.seed {
    display: flex;
}
.seed .num {
    flex: 1;
}
.seed .toggle {
    margin-left: -1px;
    border-top-right-radius: 5px;
}
.total {
    padding: 1px 8px 0;
    margin-bottom: -3px;
    line-height: 15px;
}
```
